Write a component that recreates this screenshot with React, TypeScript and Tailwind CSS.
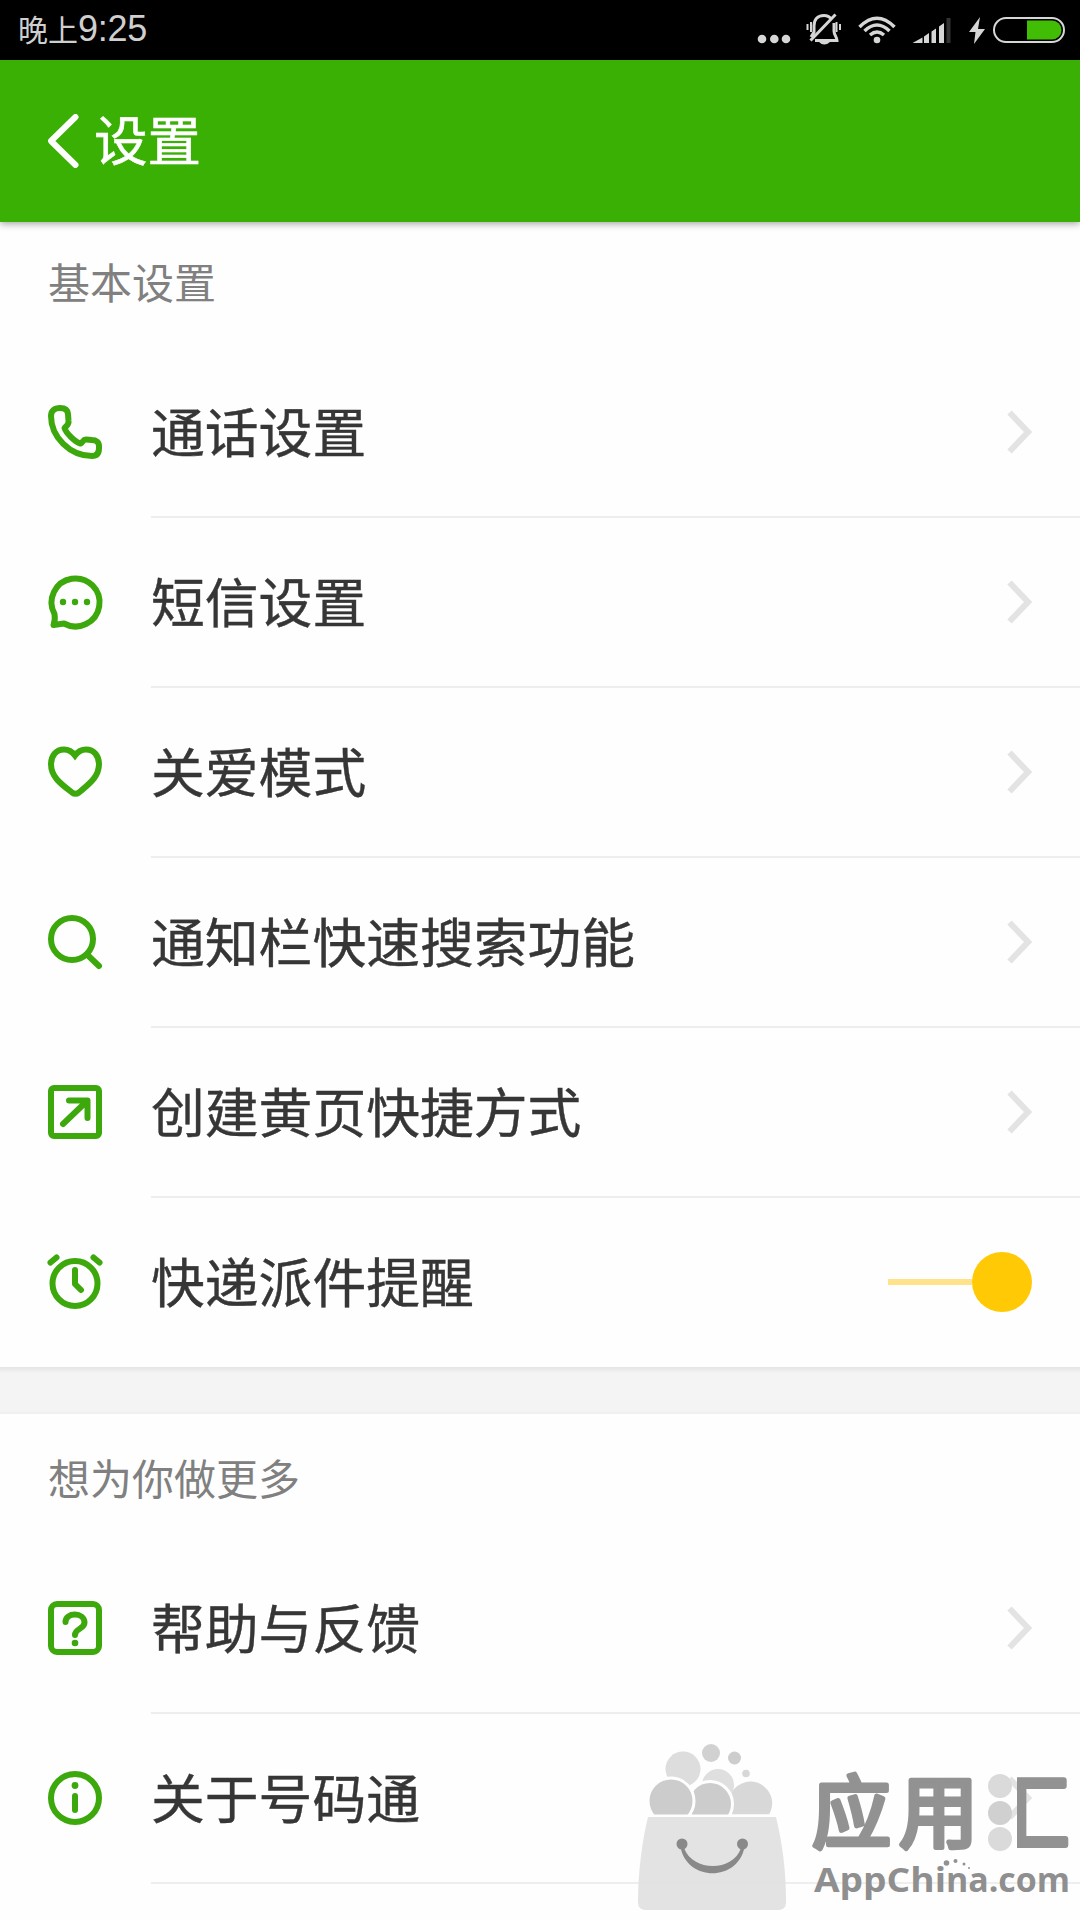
import type { ReactNode } from "react";

type Row = { id: string; title: string; icon: ReactNode; toggle?: boolean };

const basicRows: Row[] = [
  {
    id: "call",
    title: "通话设置",
    icon: (
      <path d="M12 3C6.500 3 3 6 3 11C3 32 22 51 44 51C49 51 51 48 51 43V41C51 37 48 35 44 35L38 34.500C35 34.300 34.500 38 32.500 38.500C27 37 18 28 16.500 23C19 20.500 21 19.500 20.500 16L20 9C19.700 5 17 3 12 3Z" />
    ),
  },
  {
    id: "sms",
    title: "短信设置",
    icon: (
      <>
        <path d="M6.500 39A24 24 0 1 1 16 48.500L5.500 50Q7.500 45 6.500 39Z" />
        <g fill="#3ca80c" stroke="none">
          <circle cx="15" cy="27" r="3.200" />
          <circle cx="27" cy="27" r="3.200" />
          <circle cx="39" cy="27" r="3.200" />
        </g>
      </>
    ),
  },
  {
    id: "care",
    title: "关爱模式",
    icon: (
      <path
        strokeLinejoin="miter"
        d="M27 10.500C23 5 19.500 4.500 16 4.500C8 4.500 3 11 3 19C3 32 13 39 24 47.500Q27.500 50 31 47.500C41 39 51 32 51 19C51 11 46 4.500 38 4.500C34.500 4.500 31 5 27 10.500Z"
      />
    ),
  },
  {
    id: "search",
    title: "通知栏快速搜索功能",
    icon: (
      <>
        <circle cx="24" cy="24" r="21" />
        <path d="M39 39.500L51 51" />
      </>
    ),
  },
  {
    id: "shortcut",
    title: "创建黄页快捷方式",
    icon: (
      <>
        <rect x="3" y="3" width="48" height="48" rx="3" />
        <path d="M15 39L38 17M21 15.500H39.500V33" />
      </>
    ),
  },
  {
    id: "express",
    title: "快递派件提醒",
    toggle: true,
    icon: (
      <>
        <circle cx="27" cy="28.500" r="22.500" />
        <path d="M27 15V29L33 35M2.500 7.500L8.500 2.500M51.500 7.500L45.500 2.500" />
      </>
    ),
  },
];

const moreRows: Row[] = [
  {
    id: "help",
    title: "帮助与反馈",
    icon: (
      <>
        <rect x="3" y="3" width="48" height="48" rx="6" />
        <path d="M17.500 21C17.500 11 36.500 11 36.500 21.500C36.500 28.500 27 27 27 34" />
        <circle cx="27" cy="42" r="3.300" fill="#3ca80c" stroke="none" />
      </>
    ),
  },
  {
    id: "about",
    title: "关于号码通",
    icon: (
      <>
        <circle cx="27" cy="27" r="24" />
        <path d="M27 25V39" />
        <circle cx="27" cy="14.500" r="3.400" fill="#3ca80c" stroke="none" />
      </>
    ),
  },
];

function StatusBar() {
  return (
    <div className="flex h-[60px] items-center justify-between bg-black pl-[18px] pr-[14px] text-[#cfcfcf]">
      <div className="flex items-baseline">
        <span className="text-[30px] leading-[60px]">晚上</span>
        <span className="text-[36px] leading-[60px] tracking-[-0.3px]">9:25</span>
      </div>
      <svg width="310" height="60" viewBox="756 0 310 60" fill="none" stroke="#d6d6d6" strokeWidth="3">
        <g fill="#d6d6d6" stroke="none">
          <circle cx="762" cy="39" r="4.300" />
          <circle cx="774.300" cy="39" r="4.300" />
          <circle cx="786" cy="39" r="4.300" />
        </g>
        {/* muted bell */}
        <path d="M831 19C829 16 827 15.500 824 15.500C817 15.500 814 20 814 26V32L811 37M834 23V31C834 35 837 37 837 40.500H815M835.500 14.500L810.500 40.500" />
        <path d="M819 42H830Q824 47 819 42Z" fill="#d6d6d6" stroke="none" />
        <path strokeWidth="2" d="M811 22V32M807.500 24V30M836.500 22V32M840 24V30" />
        {/* wifi */}
        <path strokeWidth="3.500" d="M859.500 27Q877 9.500 894.500 27M864.500 31Q877 19 889.500 31M870 35Q877 29 884 35" />
        <circle cx="877" cy="40" r="3.300" fill="#d6d6d6" stroke="none" />
        {/* signal */}
        <path d="M912.500 43L922.500 37.500V43ZM924 36.500L929 33V43H924ZM931.500 31.500L936 28.500V43H931.500ZM939 26.500L944 23V43H939Z" fill="#d6d6d6" stroke="none" />
        <path d="M946.500 18H950.500V43H946.500Z" fill="#333" stroke="none" />
        {/* charging */}
        <path d="M980 17L969 32H975.500L974 44L985 29H978Z" fill="#d6d6d6" stroke="none" />
        <rect x="994" y="18" width="70" height="24" rx="12" strokeWidth="2" />
        <path d="M1027 20.500H1052A9.500 9.500 0 0 1 1052 39.500H1027Z" fill="#42bd05" stroke="none" />
      </svg>
    </div>
  );
}

function Header() {
  return (
    <header className="relative z-10 flex h-[162px] items-center bg-[#3aaf04] pl-[48px] shadow-[0_2px_7px_rgba(0,0,0,0.35)]">
      <svg width="32" height="54" viewBox="0 0 32 54" fill="none" stroke="#fff" strokeWidth="6" strokeLinecap="round" strokeLinejoin="round">
        <path d="M27.500 3L3 27L27.500 51" />
      </svg>
      <h1 className="ml-[14px] pt-[4px] text-[53.500px] leading-[80px] text-white [-webkit-text-stroke:0.6px_#fff]">设置</h1>
    </header>
  );
}

function SettingRow({ row, last }: { row: Row; last?: boolean }) {
  return (
    <li className="flex h-[170px] pl-[48px]">
      <div className="flex w-[103px] shrink-0 items-center pb-[2px]">
        <svg width="54" height="54" viewBox="0 0 54 54" fill="none" stroke="#3ca80c" strokeWidth="6" strokeLinecap="round" strokeLinejoin="round" className="overflow-visible">
          {row.icon}
        </svg>
      </div>
      <div className={`flex flex-1 items-center justify-between pr-[48px] ${last ? "pb-[2px]" : "border-b-2 border-[#eeeeee]"}`}>
        <span className="pt-[4px] text-[53.800px] leading-[80px] text-[#363636] [-webkit-text-stroke:0.4px_#363636]">{row.title}</span>
        {row.toggle ? (
          <span className="flex items-center">
            <span className="h-[6px] w-[84px] bg-[#ffe28a]" />
            <span className="size-[60px] rounded-full bg-[#ffca05]" />
          </span>
        ) : (
          <svg width="25" height="46" viewBox="0 0 25 46" fill="none" stroke="#e3e3e3" strokeWidth="6">
            <path d="M2.500 3.500L21 23L2.500 42.500" />
          </svg>
        )}
      </div>
    </li>
  );
}

function Watermark() {
  return (
    <div className="absolute bottom-0 left-[630px]">
      <svg width="450" height="190" viewBox="630 1730 450 190" className="block">
        <g opacity="0.95">
          <circle cx="683" cy="1769" r="17.500" fill="#dcdcdc" />
          <circle cx="711" cy="1753" r="9" fill="#cfcfcf" />
          <circle cx="734.500" cy="1758" r="6.500" fill="#cbcbcb" />
          <circle cx="746" cy="1773.500" r="3.800" fill="#d5d5d5" />
          <circle cx="718" cy="1785" r="16" fill="#dedede" />
          <path d="M732 1814.500V1792A20.500 20.500 0 0 1 769 1814.500Z" fill="#d6d6d6" />
          <circle cx="710" cy="1804" r="22.500" fill="#cacaca" stroke="#fff" strokeWidth="3" />
          <circle cx="671" cy="1801" r="23" fill="#cacaca" stroke="#fff" strokeWidth="3" />
          <path d="M640 1814.500H790V1830H640Z" fill="#fefefe" />
          <path d="M648 1817H776C782 1842 786 1869 786 1902Q786 1910 778 1910H646Q638 1910 638 1902C638 1872 642 1842 648 1817Z" fill="#e2e2e2" />
          <g fill="#838383">
            <circle cx="682" cy="1844" r="5.500" />
            <circle cx="742.500" cy="1844" r="5.500" />
            <path d="M680.500 1847C687 1882 738 1882 744.500 1847L741 1848C733 1872 693 1872 684 1848Z" />
          </g>
        </g>
        {/* the dots take the place of the left part of 汇 */}
        <g fill="#929292" stroke="#929292" strokeWidth="5" strokeLinejoin="round" strokeLinecap="round" fontFamily="'Noto Sans CJK SC', sans-serif" fontWeight="400" fontSize="79">
          <clipPath id="huiRight">
            <rect x="1017" y="1760" width="65" height="100" />
          </clipPath>
          <text x="812" y="1842">应</text>
          <text x="899" y="1842">用</text>
          <text x="990" y="1843" strokeWidth="6" clipPath="url(#huiRight)">汇</text>
        </g>
        <g fill="#dadada">
          <circle cx="1000" cy="1786" r="12" />
          <circle cx="1000" cy="1813" r="12" fill="#d0d0d0" />
          <circle cx="1000" cy="1839" r="12" />
        </g>
        <text y="1891.500" fill="#8f8f8f" fontFamily="'Open Sans', 'Noto Sans', sans-serif" fontWeight="700" fontSize="34">
          <tspan x="814" textLength="132" lengthAdjust="spacingAndGlyphs">AppChi</tspan>
          <tspan x="946" textLength="124" lengthAdjust="spacingAndGlyphs">na.com</tspan>
        </text>
        <g fill="#929292">
          <circle cx="946.500" cy="1863" r="2.800" />
          <circle cx="955.500" cy="1861" r="2" />
          <circle cx="964" cy="1864" r="1.500" />
          <circle cx="969" cy="1868" r="1" />
        </g>
      </svg>
    </div>
  );
}

export default function App() {
  return (
    <div className="relative h-[1920px] w-[1080px] overflow-hidden bg-[#fefefe] font-['Liberation_Sans','Noto_Sans_CJK_SC',sans-serif]">
      <StatusBar />
      <Header />

      <section className="h-[1145px]">
        <h2 className="h-[126px] pl-[48px] pt-[32px] text-[42px] leading-[62px] text-[#808080]">基本设置</h2>
        <ul>
          {basicRows.map((row, i) => (
            <SettingRow key={row.id} row={row} last={i === basicRows.length - 1} />
          ))}
        </ul>
      </section>

      <div className="h-[47px] border-b-2 border-[#f0f0f0] bg-[linear-gradient(#e4e4e4,#f4f4f4_6px)]" />

      <section>
        <h2 className="h-[130px] pl-[48px] pt-[36px] text-[42px] leading-[62px] text-[#808080]">想为你做更多</h2>
        <ul>
          {moreRows.map((row) => (
            <SettingRow key={row.id} row={row} />
          ))}
        </ul>
      </section>

      <Watermark />
    </div>
  );
}
